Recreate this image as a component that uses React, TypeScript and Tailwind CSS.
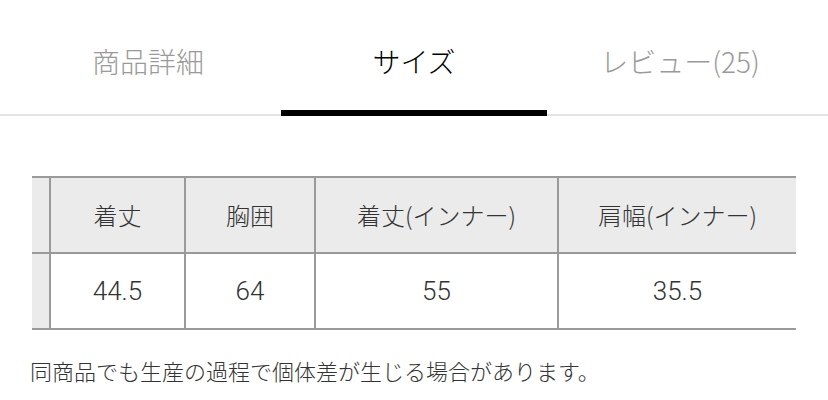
const tabs = [
  { label: "商品詳細", active: false },
  { label: "サイズ", active: true },
  { label: "レビュー(25)", active: false },
];

const headers = ["着丈", "胸囲", "着丈(インナー)", "肩幅(インナー)"];
const values = ["44.5", "64", "55", "35.5"];
const widths = ["w-[135px]", "w-[130px]", "w-[243px]", "w-[239px]"];

export default function App() {
  return (
    <div className="w-[828px] h-[400px] bg-white overflow-hidden font-['Noto_Sans_CJK_JP',sans-serif] font-light">
      <div className="flex border-b-2 border-[#e4e4e4] px-[15px]">
        {tabs.map((t) => (
          <div
            key={t.label}
            className={`flex-1 -mb-[2px] pt-[40px] pb-[28px] border-b-[6px] text-center text-[28px] leading-[42px] ${
              t.active ? "border-black text-black" : "border-transparent text-[#9a9a9a]"
            }`}
          >
            {t.label}
          </div>
        ))}
      </div>

      <div className="ml-[32px] mt-[60px] w-[764px] border-y-2 border-[#9a9a9a] text-[#333]">
        <div className="flex h-[76px] bg-[#ebebeb] border-b-2 border-[#9a9a9a]">
          <div className="w-[17px]" />
          {headers.map((h, i) => (
            <div
              key={h}
              className={`${widths[i]} border-l-2 border-[#9a9a9a] flex items-center justify-center text-[24px]`}
            >
              {h}
            </div>
          ))}
        </div>
        <div className="flex h-[74px]">
          <div className="w-[17px] bg-[#ebebeb]" />
          {values.map((v, i) => (
            <div
              key={i}
              className={`${widths[i]} border-l-2 border-[#9a9a9a] flex items-center justify-center text-[26px] font-['Roboto',sans-serif] font-light`}
            >
              {v}
            </div>
          ))}
        </div>
      </div>

      <p className="ml-[30px] mt-[24px] text-[22px] leading-[32px] text-[#333]">
        同商品でも生産の過程で個体差が生じる場合があります。
      </p>
    </div>
  );
}
